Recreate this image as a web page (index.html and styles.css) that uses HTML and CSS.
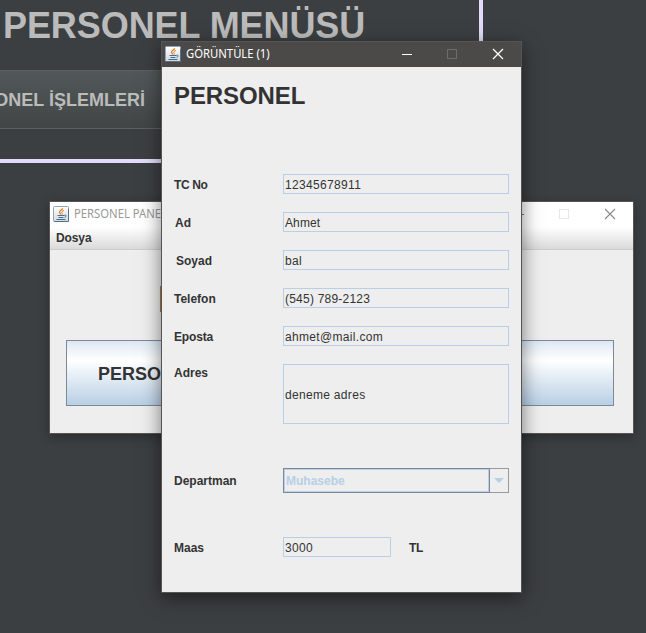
FILE: index.html
```
<!DOCTYPE html>
<html lang="tr">
<head>
<meta charset="utf-8">
<title>Personel</title>
<link rel="stylesheet" href="styles.css">
</head>
<body>
<svg class="defs" width="0" height="0">
  <defs>
    <linearGradient id="tile" x1="0" y1="0" x2="0" y2="1">
      <stop offset="0" stop-color="#ffffff"/>
      <stop offset="1" stop-color="#d5d9dd"/>
    </linearGradient>
    <symbol id="java" viewBox="0 0 16 16">
      <rect x=".5" y=".5" width="15" height="15" rx="1" fill="url(#tile)" stroke="#8fa5b8"/>
      <path d="M15.5 3v12.5H1" fill="none" stroke="#54718c"/>
      <path d="M9.500 2.200C9.500 4 6 4.800 6.500 6.300c.3.800 1 1.200 1.100 2" fill="none" stroke="#e67a17" stroke-width="1.300"/>
      <path d="M11 4.500C8.200 5.500 8.500 6.300 9.100 7c.5.600.2 1.200-.3 1.600" fill="none" stroke="#e67a17"/>
      <path d="M4.500 9.500h7M5.500 11.500h5M3.500 13.500h9M11.500 9.300c2.300-.8 2.300 1.500 0 2" fill="none" stroke="#416f91"/>
    </symbol>
  </defs>
</svg>

<div class="menu-panel">
  <h1 class="menu-title">PERSONEL MENÜSÜ</h1>
  <div class="menu-button">PERSONEL İŞLEMLERİ</div>
</div>

<section class="window back">
  <header class="titlebar">
    <svg class="java"><use href="#java"/></svg>
    <span class="caption">PERSONEL PANELİ</span>
    <svg class="controls" width="115" height="12" viewBox="0 0 115 12">
      <path d="M1 6.500h10" stroke="#777"/>
      <rect x="46.500" y="1.500" width="9" height="9" fill="none" stroke="#e8e8e8"/>
      <path d="M92 1l10 10M102 1l-10 10" stroke="#888" stroke-width="1.100"/>
    </svg>
  </header>
  <nav class="menubar">Dosya</nav>
  <div class="back-body">
    <div class="back-heading">PERSONEL</div>
    <div class="back-button">PERSONEL</div>
  </div>
</section>

<section class="window front">
  <header class="titlebar">
    <svg class="java"><use href="#java"/></svg>
    <span class="caption">GÖRÜNTÜLE (1)</span>
    <svg class="controls" width="115" height="12" viewBox="0 0 115 12">
      <path d="M1 6.500h10" stroke="#fff"/>
      <rect x="46.500" y="1.500" width="9" height="9" fill="none" stroke="#6d6c6a"/>
      <path d="M92 1l10 10M102 1l-10 10" stroke="#fff" stroke-width="1.300"/>
    </svg>
  </header>
  <form class="form">
    <h2 class="form-title">PERSONEL</h2>
    <div class="row"><span class="label l-tc">TC No</span><span class="field f-tc">12345678911</span></div>
    <div class="row"><span class="label l-ad">Ad</span><span class="field f-ad">Ahmet</span></div>
    <div class="row"><span class="label l-soyad">Soyad</span><span class="field f-soyad">bal</span></div>
    <div class="row"><span class="label l-telefon">Telefon</span><span class="field f-telefon">(545) 789-2123</span></div>
    <div class="row"><span class="label l-eposta">Eposta</span><span class="field f-eposta">ahmet@mail.com</span></div>
    <div class="row address"><span class="label l-adres">Adres</span><span class="field f-adres">deneme adres</span></div>
    <div class="row department"><span class="label l-departman">Departman</span>
      <span class="combo"><span class="combo-value">Muhasebe</span><span class="combo-arrow"><svg width="10" height="5" viewBox="0 0 10 5"><path d="M0 0h10L5 5z" fill="#b8cfe5"/></svg></span></span>
    </div>
    <div class="row salary"><span class="label l-maas">Maas</span><span class="field f-maas">3000</span><span class="unit">TL</span></div>
  </form>
</section>
</body>
</html>
```
FILE: styles.css
```
* { box-sizing: border-box; }
html, body { height: 100%; }
body {
  margin: 0;
  position: relative;
  overflow: hidden;
  background: #3c3f41;
  color: #333;
  font-family: "Liberation Sans", Arial, sans-serif;
  font-size: 12px;
}
.defs { position: absolute; }
.menu-panel {
  width: 483px;
  height: 163px;
  border: solid #e0dcfa;
  border-width: 0 4px 4px 0;
}
.menu-title {
  margin: 0;
  height: 70px;
  padding: 5px 0 0 3px;
  font-size: 36px;
  line-height: 41px;
  letter-spacing: -0.08px;
  white-space: nowrap;
  color: #bbb;
}
.menu-button {
  display: flex;
  justify-content: flex-end;
  align-items: center;
  width: 410px;
  height: 59px;
  margin-left: -95px;
  padding: 2px 170px 0 0;
  border: 1px solid #5e6060;
  border-right: 0;
  background: linear-gradient(#525859, #414546);
  font-size: 18px;
  font-weight: bold;
  color: #bbb;
  white-space: nowrap;
}
.window {
  position: absolute;
  display: flex;
  flex-direction: column;
  border: 1px solid #555;
  background: #eee;
}
.back {
  left: 49px;
  top: 201px;
  width: 585px;
  height: 233px;
  box-shadow: 0 3px 10px rgba(0, 0, 0, .3);
}
.front {
  left: 161px;
  top: 41px;
  width: 361px;
  height: 552px;
  box-shadow: 0 5px 18px rgba(0, 0, 0, .5);
}
.titlebar {
  display: flex;
  align-items: center;
  flex: none;
  height: 25px;
  padding: 0 5px 2px 3px;
  font-family: "Noto Sans", "Open Sans", sans-serif;
}
.java { width: 16px; height: 16px; flex: none; }
.caption { margin-left: 5px; white-space: nowrap; transform-origin: left; transform: scaleX(.94); }
.controls { margin-left: auto; }
.front .titlebar { background: #4c4a48; color: #fff; }
.back .titlebar { background: #fff; color: #999; }
.menubar {
  height: 23px;
  flex: none;
  padding-left: 6px;
  border-bottom: 1px solid #ccc;
  background: linear-gradient(#fff, #dadada);
  font-weight: bold;
  line-height: 22px;
  letter-spacing: -0.1px;
}
.back-body { padding: 37px 19px 0 16px; }
.back-heading { height: 53px; margin-left: 92px; font-size: 36px; font-weight: bold; line-height: 26px; }
.back-button {
  height: 66px;
  padding-left: 31px;
  border: 1px solid #7a8a99;
  background: linear-gradient(#dde8f3, #fff 30%, #b8cfe5);
  font-size: 18px;
  font-weight: bold;
  line-height: 66px;
}
.form { padding: 0 12px; }
.form-title {
  height: 107px;
  margin: 0;
  padding-top: 15px;
  font-size: 24px;
  line-height: 28px;
  letter-spacing: -0.1px;
}
.row { display: flex; height: 20px; margin-bottom: 18px; line-height: 20px; white-space: nowrap; }
.label { width: 109px; flex: none; font-weight: bold; padding-top: 1px; }
.field {
  width: 226px;
  padding-left: 1px;
  border: 1px solid #b8cfe5;
}
.f-tc, .f-maas { letter-spacing: .33px; }
.f-ad { letter-spacing: .1px; }
.f-soyad { letter-spacing: .3px; }
.f-telefon { letter-spacing: .22px; }
.f-eposta { letter-spacing: .33px; }
.f-adres { letter-spacing: .31px; }
.l-tc { letter-spacing: -.4px; }
.l-eposta { letter-spacing: -.15px; }
.l-ad { padding-left: 1px; }
.l-soyad { padding-left: 2px; }
.address { height: 60px; margin-bottom: 44px; }
.address .label { padding-top: 0; line-height: 18px; }
.address .field { line-height: 60px; }
.department { height: 25px; margin-bottom: 44px; }
.department .label { line-height: 24px; }
.combo {
  display: flex;
  width: 226px;
  font-weight: bold;
  color: #b8cfe5;
}
.combo-value {
  flex: 1;
  padding-left: 2px;
  border: 1px solid #7a8a99;
  box-shadow: inset 0 0 0 1px #b8cfe5;
  line-height: 24px;
}
.combo-arrow {
  display: flex;
  align-items: center;
  justify-content: center;
  width: 19px;
  border: 1px solid #999;
  border-left: 0;
}
.salary .field { width: 108px; }
.unit { margin-left: 18px; padding-top: 1px; font-weight: bold; letter-spacing: -.3px; }
```
